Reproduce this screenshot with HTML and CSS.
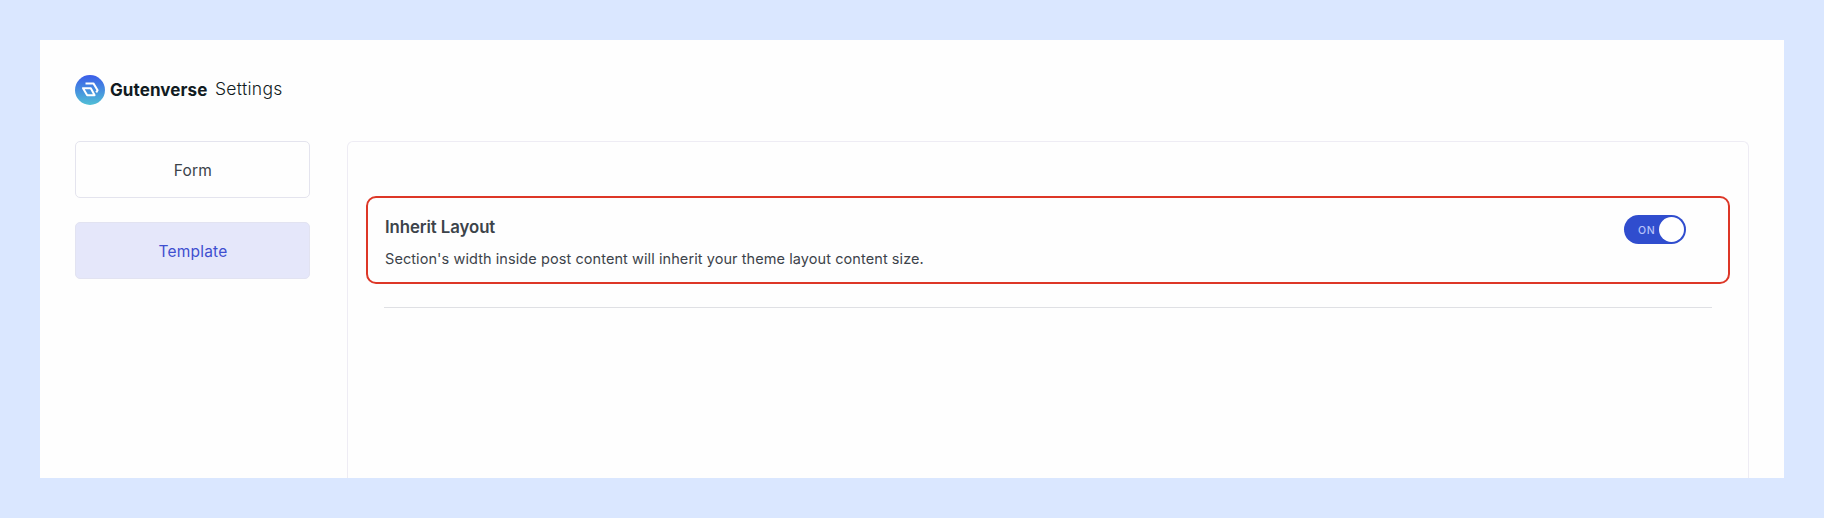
FILE: index.html
```html
<!DOCTYPE html>
<html lang="en">
<head>
<meta charset="utf-8">
<title>Gutenverse Settings</title>
<link rel="stylesheet" href="styles.css">
</head>
<body>
<div class="page">
  <header class="header">
    <svg class="logo" viewBox="0 0 30 30" aria-hidden="true">
      <defs><linearGradient id="sky" x1="0" y1="0" x2="0" y2="1"><stop offset="0" stop-color="#3b5ce9"/><stop offset="1" stop-color="#50bfd5"/></linearGradient></defs>
      <circle cx="15" cy="15" r="15" fill="url(#sky)"/>
      <path d="M10.5 8.4H18.4L22.6 15.2L21.2 17.4M8 13.2H15.8L19.6 20.2H12.2Z" fill="none" stroke="#fff" stroke-width="2" stroke-linejoin="round"/>
    </svg>
    <span class="brand">Gutenverse</span>
    <span class="section">Settings</span>
  </header>
  <main class="content">
    <nav class="tabs">
      <a class="tab">Form</a>
      <a class="tab active">Template</a>
    </nav>
    <section class="panel">
      <div class="option">
        <div class="copy">
          <h2 class="title">Inherit Layout</h2>
          <p class="description">Section's width inside post content will inherit your theme layout content size.</p>
        </div>
        <div class="toggle"><span class="state">ON</span><span class="knob"></span></div>
      </div>
      <div class="divider"></div>
    </section>
  </main>
</div>
</body>
</html>
```
FILE: styles.css
```css
* { box-sizing: border-box; }
body { margin: 0; height: 518px; padding: 40px; background: #dae7ff; font-family: Inter, "Liberation Sans", sans-serif; color: #3c434a; overflow: hidden; }
.page { height: 438px; padding: 35px 35px 0; background: #fefefe; overflow: hidden; display: flex; flex-direction: column; }
.header { display: flex; align-items: center; height: 30px; flex: none; color: #111b22; }
.logo { width: 30px; height: 30px; margin-right: 5px; }
.brand { width: 105px; font-size: 17px; font-weight: 700; letter-spacing: .1px; line-height: 30px; }
.section { font-size: 17.5px; font-weight: 300; letter-spacing: .3px; line-height: 28px; margin-top: -2px; }
.content { display: flex; flex: 1; gap: 37px; margin-top: 36px; }
.tabs { display: flex; flex-direction: column; gap: 24px; width: 235px; flex: none; }
.tab { height: 57px; padding: 1px 0 0 1px; border: 1.5px solid #e4e4ee; border-radius: 5px; display: flex; align-items: center; justify-content: center; font-size: 15.5px; letter-spacing: .2px; }
.tab.active { background: #e5e7fa; border-color: #e2e3f1; color: #3f4fd0; }
.panel { flex: 1; border: 1.5px solid #eeecf4; border-bottom: 0; border-radius: 6px 6px 0 0; padding: 54px 18px 0; }
.option { display: flex; justify-content: space-between; height: 88px; padding: 17px 42px 0 17px; border: 2px solid #dd3727; border-radius: 10px; }
.title { margin: 0; font-size: 16.8px; font-weight: 600; letter-spacing: -.08px; line-height: 25px; }
.description { margin: 8px 0 0; font-size: 14.5px; line-height: 22px; letter-spacing: .08px; white-space: nowrap; }
.toggle { width: 62px; height: 29px; border-radius: 15px; background: #304dce; display: flex; align-items: center; justify-content: space-between; padding: 0 2px 0 14px; }
.state { padding-top: 1px; font-size: 10.5px; font-weight: 500; letter-spacing: .6px; color: #b6c2fa; }
.knob { width: 25px; height: 25px; border-radius: 50%; background: #fff; }
.divider { height: 1px; margin: 23px 18px 0; background: #dfe0e4; }
```
